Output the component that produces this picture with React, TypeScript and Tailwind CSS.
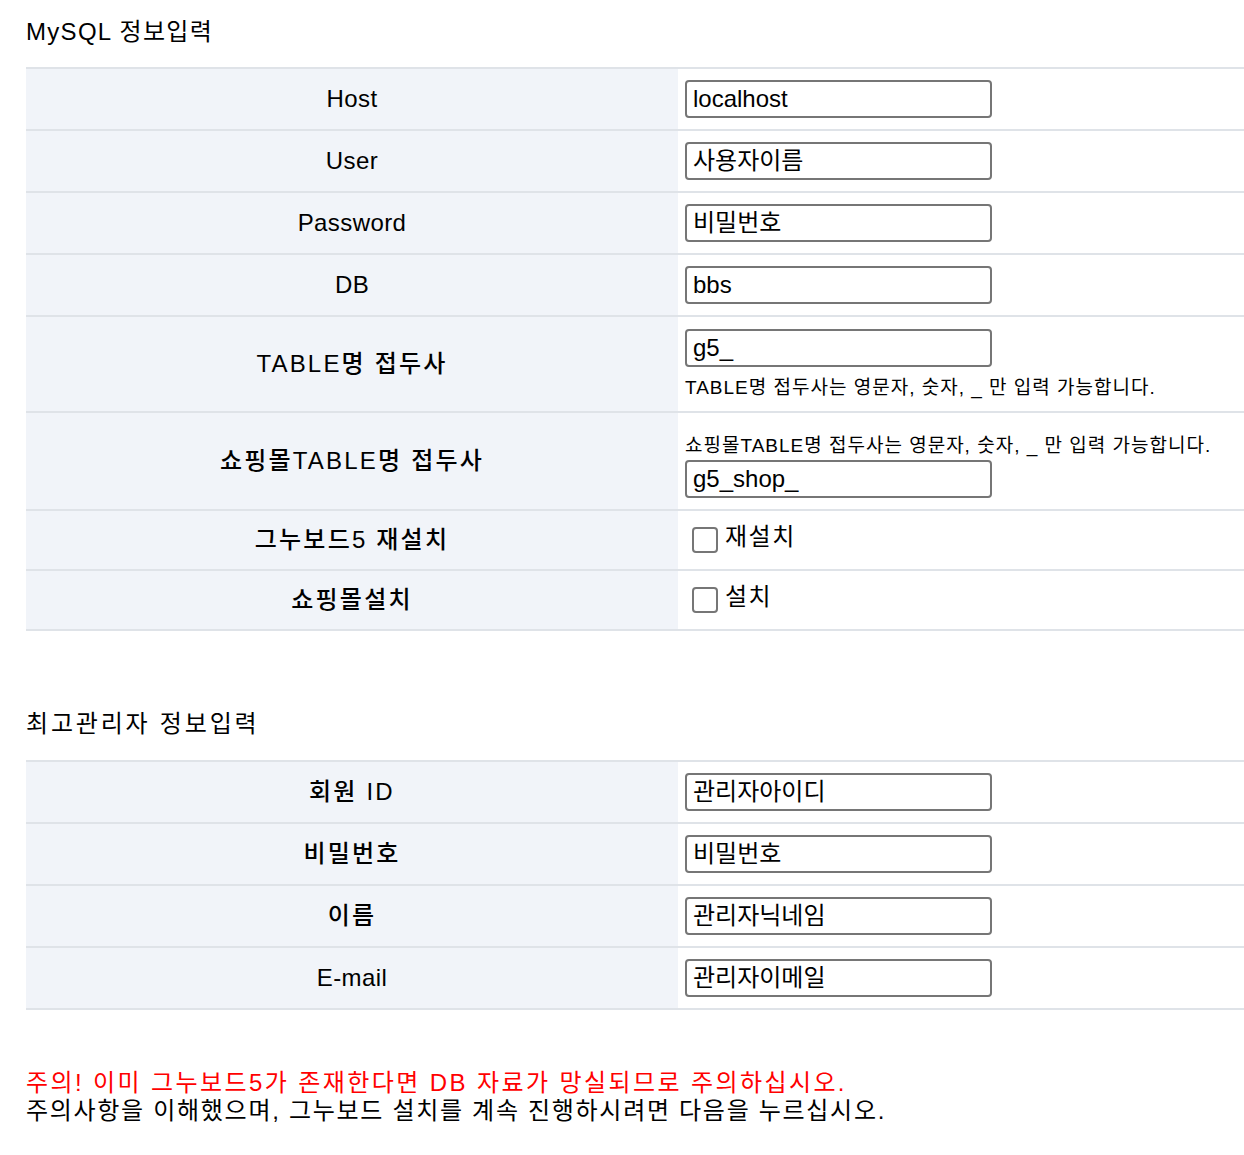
const font = "font-['Liberation_Sans','Noto_Sans_CJK_KR',sans-serif]";

type Row = {
  label: string;
  value?: string;
  help?: string;
  helpTop?: boolean;
  check?: string;
  h: string;
};

const mysqlRows: Row[] = [
  { label: "Host", value: "localhost", h: "h-[62px]" },
  { label: "User", value: "사용자이름", h: "h-[62px]" },
  { label: "Password", value: "비밀번호", h: "h-[62px]" },
  { label: "DB", value: "bbs", h: "h-[62px]" },
  {
    label: "TABLE명 접두사",
    value: "g5_",
    help: "TABLE명 접두사는 영문자, 숫자, _ 만 입력 가능합니다.",
    h: "h-[96px]",
  },
  {
    label: "쇼핑몰TABLE명 접두사",
    value: "g5_shop_",
    help: "쇼핑몰TABLE명 접두사는 영문자, 숫자, _ 만 입력 가능합니다.",
    helpTop: true,
    h: "h-[98px]",
  },
  { label: "그누보드5 재설치", check: "재설치", h: "h-[60px]" },
  { label: "쇼핑몰설치", check: "설치", h: "h-[60px]" },
];

const adminRows: Row[] = [
  { label: "회원 ID", value: "관리자아이디", h: "h-[62px]" },
  { label: "비밀번호", value: "비밀번호", h: "h-[62px]" },
  { label: "이름", value: "관리자닉네임", h: "h-[62px]" },
  { label: "E-mail", value: "관리자이메일", h: "h-[62px]" },
];

const hangul = /[가-힣]/;

function Field({ value }: { value: string }) {
  return (
    <div className="flex h-[38px] w-[307px] items-center rounded-[4px] border-2 border-[#767676] bg-white px-[6px] text-[24px] leading-none text-black">
      {value}
    </div>
  );
}

function Help({ text }: { text: string }) {
  return (
    <p className="whitespace-nowrap text-[19px] leading-[22px] tracking-[1px] text-black">
      {text}
    </p>
  );
}

function InfoTable({ rows }: { rows: Row[] }) {
  return (
    <table className="w-full border-collapse border-t-2 border-[#dfe3e8]">
      <tbody>
        {rows.map((row) => (
          <tr key={row.label} className={`${row.h} border-b-2 border-[#dfe3e8]`}>
            <th
              className={`w-[652px] bg-[#f1f4f9] text-center text-[24px] font-medium text-black ${
                hangul.test(row.label) ? "tracking-[2.2px]" : "tracking-[0.4px]"
              }`}
            >
              {row.label}
            </th>
            <td className="pl-[7px] align-middle">
              {row.check ? (
                <label className="flex items-center gap-[7px] pl-[7px] text-[24px] tracking-[1.5px] text-black">
                  <span className="h-[26px] w-[26px] rounded-[4px] border-2 border-[#767676] bg-white" />
                  <span className="-mt-[6px]">{row.check}</span>
                </label>
              ) : row.helpTop ? (
                <div className="flex flex-col gap-[3px] pt-[10px]">
                  {row.help && <Help text={row.help} />}
                  {row.value && <Field value={row.value} />}
                </div>
              ) : (
                <div className="flex flex-col gap-[10px]">
                  {row.value && <Field value={row.value} />}
                  {row.help && <Help text={row.help} />}
                </div>
              )}
            </td>
          </tr>
        ))}
      </tbody>
    </table>
  );
}

export default function App() {
  return (
    <div className={`${font} min-h-[1155px] bg-white pl-[26px] text-black`}>
      <h2 className="pt-[16px] text-[24px] leading-[32px] tracking-[1.3px]">MySQL 정보입력</h2>
      <div className="mt-[19px]">
        <InfoTable rows={mysqlRows} />
      </div>

      <h2 className="mt-[77px] text-[24px] leading-[32px] tracking-[2.8px]">최고관리자 정보입력</h2>
      <div className="mt-[20px]">
        <InfoTable rows={adminRows} />
      </div>

      <div className="mt-[59px] text-[24px] leading-[28px]">
        <p className="tracking-[2.4px] text-[#ff0000]">
          주의! 이미 그누보드5가 존재한다면 DB 자료가 망실되므로 주의하십시오.
        </p>
        <p className="tracking-[1.7px]">
          주의사항을 이해했으며, 그누보드 설치를 계속 진행하시려면 다음을 누르십시오.
        </p>
      </div>
    </div>
  );
}
